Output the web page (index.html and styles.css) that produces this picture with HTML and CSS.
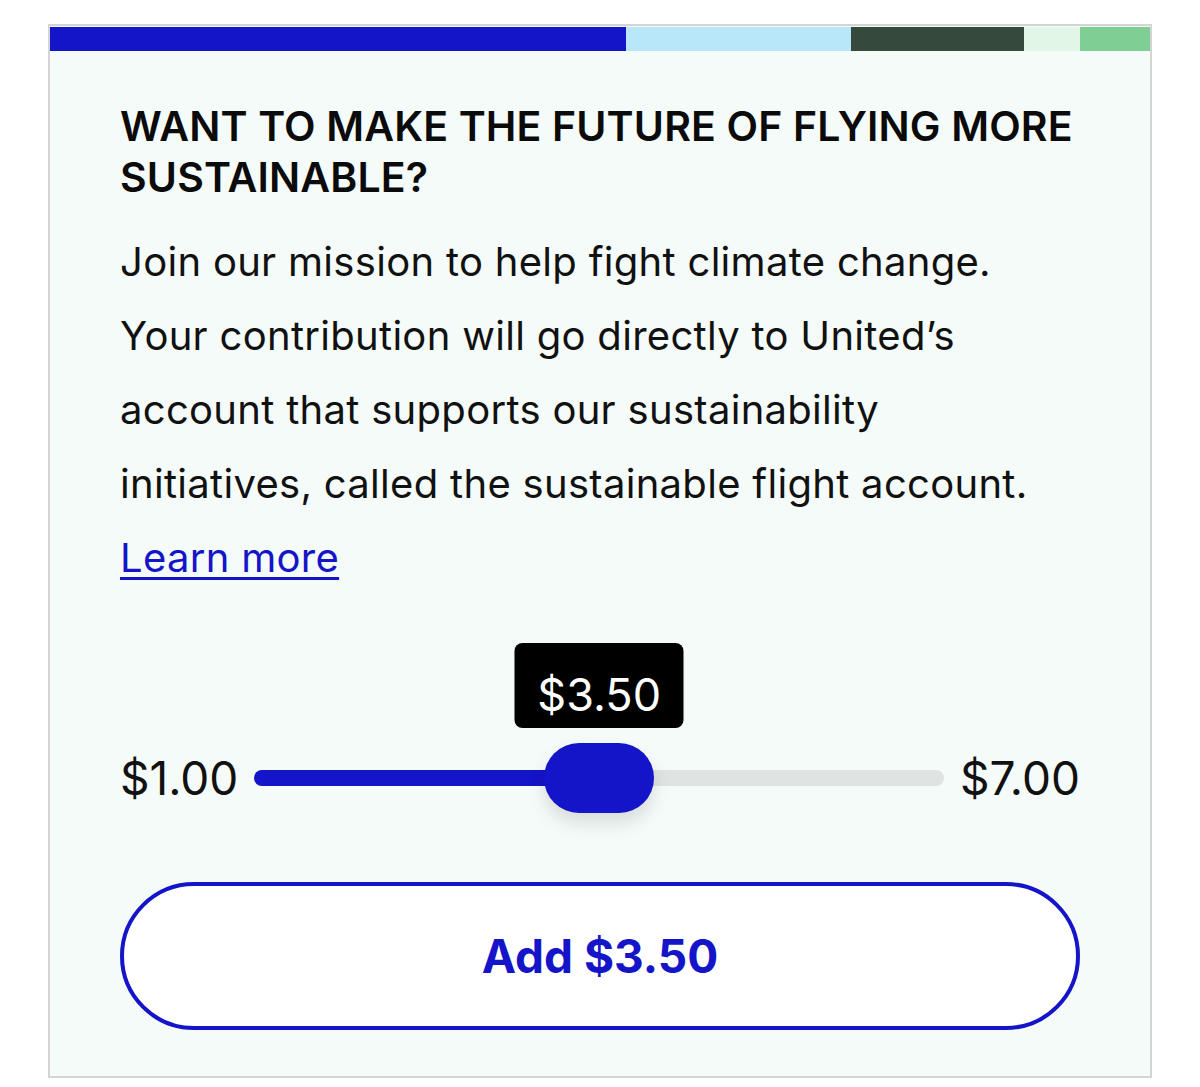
FILE: index.html
```html
<!DOCTYPE html>
<html lang="en">
<head>
    <meta charset="UTF-8">
    <meta name="viewport" content="width=device-width, initial-scale=1.0">
    <title>Sustainable flight</title>
    <link rel="stylesheet" href="styles.css">
</head>
<body>
    <div class="card">
        <div class="stripe">
            <span class="seg seg-blue"></span>
            <span class="seg seg-sky"></span>
            <span class="seg seg-forest"></span>
            <span class="seg seg-mint"></span>
            <span class="seg seg-green"></span>
        </div>
        <div class="content">
            <h2 class="title">Want to make the future of flying more sustainable?</h2>
            <p class="text">Join our mission to help fight climate change. Your contribution will go directly to United’s account that supports our sustainability initiatives, called the sustainable flight account.</p>
            <a class="link" href="#">Learn more</a>

            <div class="slider">
                <span class="limit">$1.00</span>
                <div class="track">
                    <div class="fill" style="width: 50%"></div>
                    <div class="thumb" style="left: 50%">
                        <span class="tip">$3.50</span>
                    </div>
                </div>
                <span class="limit">$7.00</span>
            </div>

            <button class="add">Add $3.50</button>
        </div>
    </div>
</body>
</html>
```

FILE: styles.css
```css
body {
    margin: 0;
    background-color: #fff;
    font-family: Inter, "Noto Sans", sans-serif;
    color: #111;
}

.card {
    width: 1100px;
    margin: 24px 0 0 48px;
    border: 2px solid #d3d5d4;
    background-color: #f5fbf8;
    padding-top: 1px;
}

.stripe {
    display: flex;
    height: 24px;
}

.seg-blue { width: 576px; background-color: #1414c8; }
.seg-sky { width: 225px; background-color: #b8e7f9; }
.seg-forest { width: 173px; background-color: #354a3d; }
.seg-mint { width: 56px; background-color: #e2f6e7; }
.seg-green { flex: 1; background-color: #7fcf94; }

.content {
    padding: 50px 70px 46px 70px;
}

.title {
    margin: 0;
    font-size: 41px;
    font-weight: 600;
    line-height: 51px;
    letter-spacing: 0.15px;
    text-transform: uppercase;
    color: #0b0b0b;
}

.text {
    margin: 22px 0 0;
    font-size: 40px;
    line-height: 74px;
    letter-spacing: 0.3px;
    color: #111;
}

.link {
    display: inline-block;
    font-size: 40px;
    line-height: 74px;
    letter-spacing: 0.3px;
    color: #1414c8;
    text-decoration-thickness: 3px;
    text-underline-offset: 5px;
}

.slider {
    display: flex;
    align-items: center;
    gap: 16px;
    height: 70px;
    margin-top: 148px;
}

.limit {
    font-size: 46px;
    color: #111;
}

.track {
    position: relative;
    flex: 1;
    height: 16px;
    border-radius: 8px;
    background-color: #dfe3e1;
}

.fill {
    height: 100%;
    border-radius: 8px;
    background-color: #1414c8;
}

.thumb {
    position: absolute;
    top: 50%;
    width: 110px;
    height: 70px;
    border-radius: 35px;
    background-color: #1414c8;
    transform: translate(-50%, -50%);
    box-shadow: 0 10px 18px rgba(0, 0, 0, 0.12);
}

.tip {
    position: absolute;
    bottom: 85px;
    left: 50%;
    transform: translateX(-50%);
    width: 169px;
    height: 85px;
    line-height: 104px;
    border-radius: 8px;
    background-color: #000;
    color: #fff;
    font-size: 45px;
    text-align: center;
}

.add {
    display: block;
    width: 100%;
    height: 148px;
    margin-top: 69px;
    border: 4px solid #1414c8;
    border-radius: 74px;
    background-color: #fff;
    color: #1414c8;
    font-family: Inter, "Noto Sans", sans-serif;
    font-size: 46px;
    font-weight: 700;
    cursor: pointer;
}
```
